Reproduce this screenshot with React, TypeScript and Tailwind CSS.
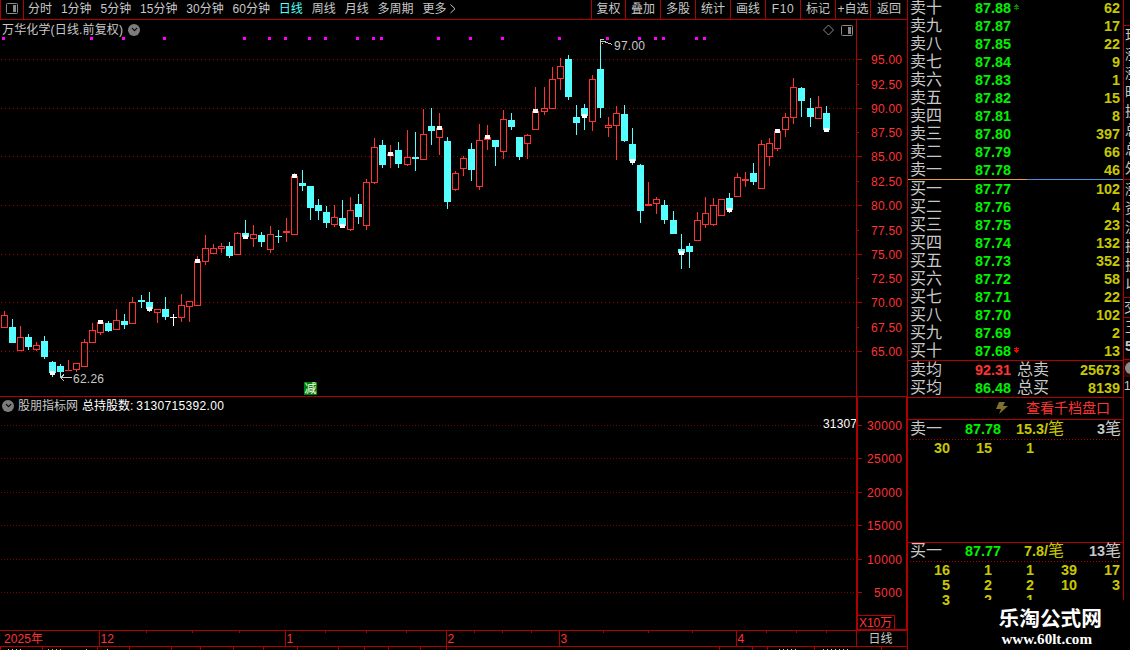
import { ChevronDown } from "lucide-react";
import clsx from "clsx";

type Kind = "r" | "c" | "w";
// x center, high, body top, body bottom, low, kind, optional marker top
type Candle = [number, number, number, number, number, Kind, number?];

const candles: Candle[] = [
  [4, 311, 315, 328, 328, "r"], [12, 319, 327, 343, 343, "c"], [20, 326, 337, 351, 351, "r"],
  [28, 334, 337, 347, 350, "c"], [36, 342, 345, 350, 351, "r"], [44, 336, 341, 357, 359, "c"],
  [52, 361, 362, 373, 377, "c", 371], [60, 364, 366, 372, 378, "c"], [68, 360, 370, 371, 371, "r"],
  [76, 363, 363, 370, 372, "r"], [84, 339, 342, 367, 367, "r"], [92, 323, 330, 343, 343, "r"],
  [100, 320, 322, 333, 335, "r", 320], [108, 321, 323, 331, 332, "c"], [116, 309, 320, 330, 330, "r"],
  [124, 314, 321, 325, 329, "c"], [132, 297, 302, 324, 324, "r"], [141, 295, 300, 302, 308, "c"],
  [149, 292, 302, 309, 312, "c", 307], [157, 309, 309, 313, 323, "r"], [165, 297, 309, 317, 320, "c"],
  [173, 314, 317, 318, 326, "w"], [181, 294, 305, 318, 322, "r"], [189, 301, 301, 307, 322, "r"],
  [197, 256, 261, 306, 306, "r", 259], [205, 235, 248, 262, 265, "r"], [213, 244, 248, 254, 254, "r"],
  [221, 243, 246, 249, 253, "r"], [229, 242, 246, 256, 258, "c"], [237, 232, 233, 255, 255, "r"],
  [245, 220, 233, 237, 239, "c", 235], [253, 225, 234, 239, 247, "r"], [261, 232, 235, 242, 247, "c"],
  [270, 226, 234, 250, 253, "r"], [278, 230, 236, 237, 243, "c"], [286, 218, 231, 233, 242, "r"],
  [294, 173, 176, 235, 235, "r", 174], [302, 170, 183, 186, 191, "c"], [310, 186, 186, 208, 220, "c"],
  [318, 199, 205, 211, 220, "c"], [326, 206, 212, 223, 228, "c"], [334, 205, 217, 225, 227, "r"],
  [342, 200, 218, 226, 228, "c", 224], [350, 197, 210, 230, 231, "r"], [358, 194, 204, 217, 224, "c"],
  [366, 179, 182, 226, 230, "r"], [374, 138, 147, 183, 184, "r"], [382, 140, 145, 165, 168, "c"],
  [390, 145, 154, 156, 168, "r", 152], [398, 142, 150, 164, 168, "c"], [407, 130, 157, 165, 166, "r"],
  [415, 132, 157, 159, 171, "c"], [423, 109, 134, 160, 160, "r"], [431, 108, 126, 131, 145, "c"],
  [439, 113, 128, 138, 155, "r", 126], [447, 137, 141, 202, 209, "c"], [455, 171, 173, 190, 191, "r"],
  [463, 156, 158, 169, 176, "r"], [471, 143, 149, 170, 181, "c"], [479, 124, 140, 187, 190, "r"],
  [487, 125, 137, 140, 150, "r", 135], [495, 140, 140, 147, 166, "c"], [503, 110, 119, 152, 159, "r"],
  [511, 113, 120, 127, 130, "c"], [519, 137, 137, 157, 160, "c"], [527, 134, 135, 144, 159, "r"],
  [535, 87, 111, 130, 130, "r", 109], [544, 87, 108, 112, 115, "r"], [552, 67, 79, 109, 109, "r"],
  [560, 58, 66, 79, 90, "r"], [568, 55, 59, 97, 100, "c"], [576, 105, 117, 123, 135, "c"],
  [584, 104, 108, 116, 130, "c", 114], [592, 75, 79, 122, 131, "r"], [600, 40, 69, 108, 118, "c"],
  [608, 117, 125, 128, 137, "r"], [616, 106, 113, 126, 160, "r"], [624, 105, 114, 141, 142, "c"],
  [632, 128, 144, 161, 165, "c", 159], [640, 164, 165, 211, 223, "c"], [648, 182, 204, 206, 206, "r"],
  [656, 197, 199, 204, 214, "r"], [664, 200, 205, 220, 224, "c"], [673, 211, 220, 234, 234, "c"],
  [681, 234, 249, 253, 269, "c", 251], [689, 243, 246, 252, 268, "c"], [697, 212, 220, 241, 241, "r"],
  [705, 197, 213, 225, 228, "r"], [713, 198, 205, 225, 226, "r"], [721, 199, 199, 216, 216, "r"],
  [729, 193, 198, 210, 213, "c", 208], [737, 173, 177, 197, 197, "r"], [745, 172, 179, 181, 187, "r"],
  [753, 163, 173, 182, 185, "c"], [761, 140, 144, 189, 189, "r"], [769, 138, 143, 157, 166, "r"],
  [777, 131, 131, 149, 151, "r", 129], [785, 113, 117, 130, 137, "r"], [793, 78, 87, 118, 124, "r"],
  [801, 87, 88, 101, 117, "c"], [810, 98, 108, 117, 127, "c"], [818, 96, 107, 119, 119, "r"],
  [826, 106, 113, 130, 130, "c", 128],
];

const dots = [3, 91, 123, 164, 244, 269, 285, 309, 325, 357, 373, 381, 438, 470, 502, 559, 607, 639, 655, 663, 696, 704];

const priceTicks: [number, string][] = [
  [59, "95.00"], [84, "92.50"], [108, "90.00"], [132, "87.50"], [156, "85.00"], [181, "82.50"], [205, "80.00"],
  [230, "77.50"], [254, "75.00"], [278, "72.50"], [302, "70.00"], [327, "67.50"], [351, "65.00"],
];

const volTicks: [number, string][] = [
  [425, "30000"], [458, "25000"], [492, "20000"], [525, "15000"], [559, "10000"], [592, "5000"],
];

const periods = ["分时", "1分钟", "5分钟", "15分钟", "30分钟", "60分钟", "日线", "周线", "月线", "多周期", "更多"];
const tools = ["复权", "叠加", "多股", "统计", "画线", "F10", "标记", "+自选", "返回"];

const nums = ["一", "二", "三", "四", "五", "六", "七", "八", "九", "十"];
const asks: [string, number][] = [
  ["87.88", 62], ["87.87", 17], ["87.85", 22], ["87.84", 9], ["87.83", 1],
  ["87.82", 15], ["87.81", 8], ["87.80", 397], ["87.79", 66], ["87.78", 46],
];
const bids: [string, number][] = [
  ["87.77", 102], ["87.76", 4], ["87.75", 23], ["87.74", 132], ["87.73", 352],
  ["87.72", 58], ["87.71", 22], ["87.70", 102], ["87.69", 2], ["87.68", 13],
];

const COLORS = { r: "#ff3232", c: "#54ffff", w: "#ffffff" };

function CandleShape({ c }: { c: Candle }) {
  const [x, high, top, bottom, low, kind, mark] = c;
  const color = COLORS[kind];
  const hollow = kind === "r" && bottom - top > 2;
  return (
    <g fill={color}>
      {hollow ? (
        <>
          <rect x={x} y={high} width={1} height={top - high} />
          <rect x={x} y={bottom} width={1} height={low - bottom} />
          <rect x={x - 2.5} y={top + 0.5} width={6} height={bottom - top - 1} fill="none" stroke={color} />
        </>
      ) : (
        <>
          <rect x={x} y={high} width={1} height={low - high} />
          <rect x={x - 3} y={top} width={7} height={bottom - top} />
        </>
      )}
      {mark && <rect x={x - 2} y={mark} width={5} height={4} fill="#fff" />}
    </g>
  );
}

function Toolbar() {
  return (
    <div className="flex h-5 border-b border-[#b00000] text-[12px] leading-[18px] text-[#c8c8c8]">
      <div className="flex w-6 items-center justify-center border-x border-[#b00000] pb-0.5">
        <svg width="12" height="11" viewBox="0 0 12 11">
          <rect x="0.5" y="0.5" width="11" height="10" rx="1" fill="none" stroke="#8a8a8a" />
          <rect x="7" y="2" width="3" height="7" fill="#8a8a8a" />
        </svg>
      </div>
      <div className="ml-1 flex flex-1 gap-[8.9px]">
        {periods.map(p => (
          <span key={p} className={clsx("whitespace-nowrap", p === "日线" && "text-[#54ffff]")}>{p}</span>
        ))}
        <svg width="6" height="10" viewBox="0 0 6 10" className="-ml-[5px] mt-1">
          <path d="M0.5 0.5 L5 4.75 L0.5 9" fill="none" stroke="#c8c8c8" />
        </svg>
      </div>
      <div className="flex">
        {tools.map(t => (
          <span
            key={t}
            className={clsx(
              "border-l border-[#b00000] text-center whitespace-nowrap",
              t === "复权" ? "w-[34px]" : t === "返回" ? "w-[37px]" : "w-[35px]",
              t === "F10" && "tracking-[0.6px]",
            )}
          >
            {t}
          </span>
        ))}
      </div>
    </div>
  );
}

function RoundChevron() {
  return (
    <span className="flex size-3 items-center justify-center rounded-full bg-[#7c7c7c] text-black">
      <ChevronDown size={9} strokeWidth={3} />
    </span>
  );
}

function PriceChart() {
  return (
    <svg width="907" height="359" viewBox="0 37 907 359" shapeRendering="crispEdges" className="block text-[12px]">
      {priceTicks.map(([y, label], i) => (
        <g key={label}>
          {i % 2 === 0 && <line x1="1" x2="856" y1={y + 0.5} y2={y + 0.5} stroke="#a00000" strokeDasharray="1 3" />}
          <line x1="856" x2={i % 2 ? 859 : 862} y1={y + 0.5} y2={y + 0.5} stroke="#b00000" />
          <text x="871" y={y + 5} fill="#ff3232" textLength="31">{label}</text>
        </g>
      ))}
      <rect x="856" y="20" width="1" height="376" fill="#b00000" />
      {candles.map(c => <CandleShape key={c[0]} c={c} />)}
      {dots.map(x => <rect key={x} x={x - 1} y="37" width="3" height="3" fill="#ff00ff" />)}
      <path d="M600.5 46V40 M600 39.5H604 M601 41.5H604 L607 42.5 L612 44.5 M602 43.5H603" fill="none" stroke="#c8c8c8" />
      <text x="614" y="50" fill="#c8c8c8" textLength="31">97.00</text>
      <path d="M72 377.5H61 M64 374.5L61 377.5L64 381" fill="none" stroke="#c8c8c8" />
      <text x="73" y="383" fill="#c8c8c8" textLength="31">62.26</text>
      <rect x="304" y="382" width="13" height="13" fill="#008000" />
      <text x="304.5" y="393" fill="#fff">减</text>
    </svg>
  );
}

function HoldingsChart() {
  return (
    <svg width="906" height="216" viewBox="0 414 906 216" shapeRendering="crispEdges" className="block text-[12px]">
      {volTicks.map(([y, label]) => (
        <g key={label}>
          <line x1="1" x2="857" y1={y + 0.5} y2={y + 0.5} stroke="#800000" strokeDasharray="1 2" />
          <line x1="857" x2="862" y1={y + 0.5} y2={y + 0.5} stroke="#b00000" />
          <text x="902" y={y + 5} fill="#ff3232" textAnchor="end" textLength={label.length * 7}>{label}</text>
        </g>
      ))}
      <text x="823" y="428" fill="#fff" textLength="34">31307</text>
      <path d="M857 615.5H894.5V629" fill="none" stroke="#b00000" />
      <text x="859" y="627" fill="#ff3232" textLength="33">X10万</text>
      <rect x="856" y="414" width="2" height="216" fill="#b00000" />
      <rect x="857" y="629" width="50" height="1" fill="#b00000" />
    </svg>
  );
}

function TimeAxis() {
  const months: [number, string][] = [[99, "12"], [285, "1"], [446, "2"], [559, "3"], [736, "4"]];
  const minor = [146, 192, 239, 325, 366, 406, 474, 502, 531, 603, 648, 692, 766, 796, 826];
  return (
    <svg width="907" height="17" viewBox="0 630 907 17" shapeRendering="crispEdges" className="block text-[12px]">
      <path d="M0 630.5H907 M0 646.5H907 M856.5 630V646" stroke="#b00000" />
      <text x="4" y="643" fill="#ff3232" textLength="39">2025年</text>
      {months.map(([x, m]) => (
        <g key={m}>
          <rect x={x} y="630" width="1" height="16" fill="#b00000" />
          <text x={x + 1.5} y="643" fill="#ff3232">{m}</text>
        </g>
      ))}
      {minor.map(x => <rect key={x} x={x} y="630" width="1" height="3" fill="#b00000" />)}
      <text x="868.5" y="643" fill="#c8c8c8" textLength="24">日线</text>
    </svg>
  );
}

// top edge of the index bar that runs off the bottom of the window
function BottomStrip() {
  const cuts = [0, 42, 97, 129, 171, 200, 233, 263, 297, 338, 364, 388, 420, 446, 719, 752, 767, 814, 881];
  return (
    <svg width="907" height="3" viewBox="0 647 907 3" shapeRendering="crispEdges" className="block">
      {cuts.map(x => <rect key={x} x={x} y="647" width="1" height="3" fill="#b00000" />)}
      <path d="M8 649.5H22 M107 649.5H108 M779 649.5H796 M823 649.5H848" stroke="#c8c8c8" strokeDasharray="1 3" />
      <path d="M48 649.5H62 M86 649.5H87" stroke="#c8c800" strokeDasharray="1 3" />
    </svg>
  );
}

function BookRow({ name, price, vol, arrow }: { name: string; price: string; vol: number; arrow?: "up" | "down" }) {
  return (
    <div className="flex h-[18px] items-center">
      <span className="w-[65px] text-[#c8c8c8]">{name}</span>
      <b className="w-[39px] text-[14.4px] text-[#00f000]">{price}</b>
      {arrow && (
        <svg
          width="5"
          height="6"
          viewBox="0 0 5 6"
          shapeRendering="crispEdges"
          className={clsx("-mt-0.5", arrow === "up" ? "text-[#008c00]" : "rotate-180 text-[#ff0000]")}
        >
          <path d="M2 0H3V1H4V2H5V3H3V4H5V5H3V6H2V5H0V4H2V3H0V2H1V1H2Z" fill="currentColor" />
        </svg>
      )}
      <b className="ml-auto text-[14.4px] text-[#c8c800]">{vol}</b>
    </div>
  );
}

function AverageRow({ name, price, total, vol, color }: { name: string; price: string; total: string; vol: number; color: string }) {
  return (
    <div className="flex h-[18px] items-center text-[#c8c8c8]">
      <span className="w-[65px]">{name}</span>
      <b className={clsx("w-[42px] text-[14.4px]", color)}>{price}</b>
      <span>{total}</span>
      <b className="ml-auto text-[14.4px] text-[#c8c800]">{vol}</b>
    </div>
  );
}

function QueueHead({ name, price, avg, count }: { name: string; price: string; avg: string; count: number }) {
  return (
    <div className="leading-[18px] text-[#c8c8c8]">
      <div className="-mt-px flex h-[19px] items-start">
        <span className="w-[55px]">{name}</span>
        <b className="w-[39px] text-[14.4px] text-[#00f000]">{price}</b>
        <span className="flex w-[60px] items-start justify-end text-[#c8c800]"><b className="text-[14.4px]">{avg}/</b>笔</span>
        <span className="-mr-px ml-auto flex items-start"><b className="text-[14.4px]">{count}</b>笔</span>
      </div>
      <div className="h-px bg-[repeating-linear-gradient(90deg,#b00000_0_1px,transparent_1px_3px)]" />
    </div>
  );
}

function QueueRow({ values }: { values: number[] }) {
  return (
    <div className="grid h-[15px] grid-cols-[40px_42px_42px_43px_43px] text-right text-[14.4px] leading-[15px] font-bold text-[#c8c800]">
      {values.map((v, i) => <span key={i}>{v}</span>)}
    </div>
  );
}

function OrderBook() {
  return (
    <div className="relative h-[650px] w-[217px] shrink-0 overflow-hidden border-l border-[#b00000] text-[16px] leading-[18px]">
      <div className="h-full border-r border-[#b00000] pl-0.5">
        <div className="-mt-px pr-[3px]">
          {asks.map(([price, vol], i) => (
            <BookRow key={price} name={"卖" + nums[9 - i]} price={price} vol={vol} arrow={i === 0 ? "up" : undefined} />
          ))}
        </div>
        <div className="-ml-0.5 flex h-px">
          <div className="w-[119px] bg-[#e0a040]" />
          <div className="flex-1 bg-[#4a90e0]" />
        </div>
        <div className="pr-[3px]">
          {bids.map(([price, vol], i) => (
            <BookRow key={price} name={"买" + nums[i]} price={price} vol={vol} arrow={i === 9 ? "down" : undefined} />
          ))}
        </div>
        <div className="-ml-0.5 h-[38px] border-y border-[#b00000] pr-[3px] pl-0.5">
          <AverageRow name="卖均" price="92.31" total="总卖" vol={25673} color="text-[#ff3232]" />
          <AverageRow name="买均" price="86.48" total="总买" vol={8139} color="text-[#00f000]" />
        </div>
        <div className="-ml-0.5 flex h-[22px] items-center justify-end gap-[18px] border-b border-[#b00000] pr-[13px] pb-px text-[14px] text-[#ff3232]">
          <svg width="12" height="12" viewBox="0 0 12 12">
            <path d="M3 0H9L7 4H12L3 12L5 7H0Z" fill="#80702c" />
          </svg>
          查看千档盘口
        </div>
        <div className="h-[122px] pt-px pr-[3px]">
          <QueueHead name="卖一" price="87.78" avg="15.3" count={3} />
          <div className="pt-[1px]"><QueueRow values={[30, 15, 1]} /></div>
        </div>
        <div className="-ml-0.5 border-t border-[#b00000] pr-[3px] pl-0.5">
          <QueueHead name="买一" price="87.77" avg="7.8" count={13} />
          <div className="pt-px">
            <QueueRow values={[16, 1, 1, 39, 17]} />
            <QueueRow values={[5, 2, 2, 10, 3]} />
            <QueueRow values={[3, 2, 1]} />
          </div>
        </div>
      </div>
      {/* site mark laid over the corner of the panel */}
      <div className="absolute right-0 bottom-0 flex h-[50px] w-[170px] flex-col items-end bg-black pt-[7px] pr-[22px] text-white">
        <b className="text-[20.7px] leading-[24px]">乐淘公式网</b>
        <b className="pr-[10px] font-['Liberation_Serif',serif] text-[15.1px] leading-[16px]">www.60lt.com</b>
      </div>
    </div>
  );
}

function SideStrip() {
  const top = ["现", "涨", "涨", "昨", "换", "总", "总", "外"];
  const mid = ["涨", "资", "流", "换", "换", "以"];
  return (
    <div className="flex h-[650px] w-1.5 shrink-0 flex-col overflow-hidden text-[14px] leading-[19px] text-[#c8c8c8]">
      <div className="h-[26px] shrink-0 border-b border-[#b00000]" />
      <div className="h-[154px] shrink-0 overflow-hidden border-b border-[#b00000] pl-px">
        {top.map((t, i) => <div key={i} className="w-4">{t}</div>)}
      </div>
      <div className="h-[118px] shrink-0 overflow-hidden border-b border-[#b00000] pl-px">
        {mid.map((t, i) => <div key={i} className="w-4">{t}</div>)}
      </div>
      <div className="h-5 shrink-0 overflow-hidden border-b border-[#b00000]"><div className="w-4">交</div></div>
      <div className="h-[42px] shrink-0 overflow-hidden border-b border-[#b00000] pl-px">
        <div className="w-4">王</div>
        <b className="block">5</b>
      </div>
      <div className="h-[17px] shrink-0 overflow-hidden bg-[#300808] pt-0.5 pl-px"><div className="size-3 rounded-full bg-[#8c8c8c]" /></div>
      <div className="text-[12px]">1</div>
    </div>
  );
}

export default function App() {
  return (
    <div className="flex h-[650px] w-[1130px] overflow-hidden bg-black font-['Liberation_Sans','Noto_Sans_CJK_SC',sans-serif]">
      <div className="w-[907px] shrink-0">
        <Toolbar />
        <div className="flex h-[17px] text-[12px]">
          <div className="flex w-[856px] items-center gap-[5px] pt-0.5 pl-0.5 text-[#c8c8c8]">
            <span className="tracking-[0.15px]">万华化学(日线.前复权)</span>
            <RoundChevron />
            <svg width="30" height="12" viewBox="0 0 30 12" className="mr-[3px] ml-auto">
              <path d="M5.5 1L10.5 6L5.5 11L0.5 6Z" fill="none" stroke="#8a8a8a" />
              <rect x="18.5" y="1.5" width="11" height="10" rx="1" fill="none" stroke="#8a8a8a" />
              <rect x="25" y="3" width="3" height="7" fill="#8a8a8a" />
            </svg>
          </div>
          <div className="h-full w-px bg-[#b00000]" />
        </div>
        <PriceChart />
        <div className="flex h-[18px] border-t border-r border-[#b00000] text-[12px]">
          <div className="flex w-[856px] items-center pl-0.5">
            <RoundChevron />
            <span className="ml-1 text-[#c8c8c8]">股朋指标网</span>
            <span className="ml-1 text-white">总持股数:</span>
            <span className="ml-[3px] tracking-[0.35px] text-white">3130715392.00</span>
          </div>
          <div className="h-full w-0.5 bg-[#b00000]" />
        </div>
        <div className="border-r border-[#b00000]"><HoldingsChart /></div>
        <TimeAxis />
        <BottomStrip />
      </div>
      <OrderBook />
      <SideStrip />
    </div>
  );
}
